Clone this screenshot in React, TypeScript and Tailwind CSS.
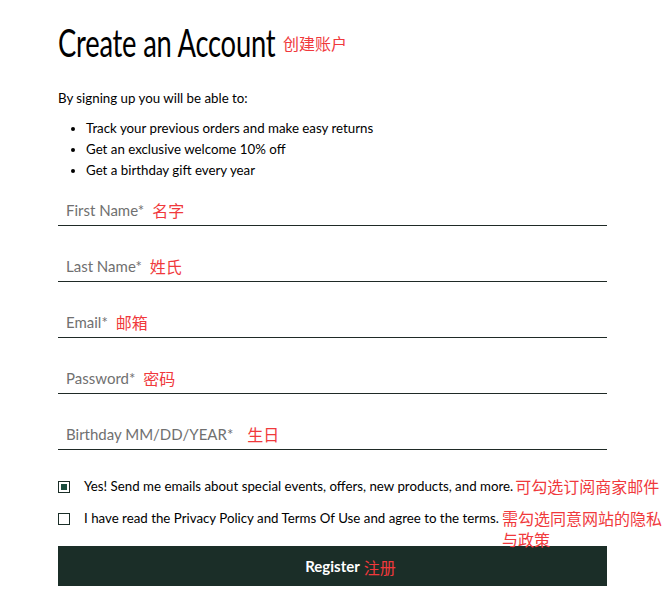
import React from "react";

const FIELDS = [
  { label: "First Name*", note: "名字", gap: "ml-2" },
  { label: "Last Name*", note: "姓氏", gap: "ml-2" },
  { label: "Email*", note: "邮箱", gap: "ml-2" },
  { label: "Password*", note: "密码", gap: "ml-2" },
  { label: "Birthday MM/DD/YEAR*", note: "生日", gap: "ml-[14px]" },
];

const BULLETS = [
  "Track your previous orders and make easy returns",
  "Get an exclusive welcome 10% off",
  "Get a birthday gift every year",
];

const body = "font-['Lato','Noto_Sans_CJK_SC',sans-serif]";
const note = "font-['Noto_Sans_CJK_SC',sans-serif] text-[#f0393c]";

export default function App() {
  return (
    <div className={`min-h-[616px] w-[666px] bg-white ${body} text-black`}>
      <div className="flex w-[607px] flex-col pl-[58px] pt-[20px]">
        <div className="flex items-end">
          <h1 className="w-[217px] origin-left scale-x-[0.72] whitespace-nowrap text-[38px] leading-[44px] tracking-[-0.3px] text-black">
            Create an Account
          </h1>
          <span className={`${note} mb-[10px] ml-2 text-[16px] leading-[22px]`}>创建账户</span>
        </div>

        <p className="mt-[25px] text-[13.3px] leading-[18px]">By signing up you will be able to:</p>
        <ul className="mt-[11px] flex list-disc flex-col pl-[28px] text-[13.3px] leading-[21px]">
          {BULLETS.map((b) => (
            <li key={b}>{b}</li>
          ))}
        </ul>

        <div className="mt-[-11px] flex flex-col">
          {FIELDS.map((f) => (
            <div key={f.label} className="flex h-[56px] items-end border-b border-[#1f2a26]">
              <div className="mb-[5px] flex items-center pl-2 text-[15px] leading-[20px]">
                <span className="text-[#707070]">{f.label}</span>
                <span className={`${note} ${f.gap} text-[16px]`}>{f.note}</span>
              </div>
            </div>
          ))}
        </div>

        <div className="mt-[25px] flex flex-col gap-[10px] text-[13.3px] leading-[22px]">
          <div className="flex items-start">
            <span className="mt-[6px] flex h-[12px] w-[12px] shrink-0 items-center justify-center border border-[#1b2e28]">
              <span className="h-[6px] w-[6px] bg-[#1b4d3e]" />
            </span>
            <span className="ml-[14px] whitespace-nowrap">
              Yes! Send me emails about special events, offers, new products, and more.
            </span>
            <span className={`${note} ml-[2px] shrink-0 whitespace-nowrap text-[16px]`}>可勾选订阅商家邮件</span>
          </div>
          <div className="flex items-start">
            <span className="mt-[6px] h-[12px] w-[12px] shrink-0 border border-[#1b2e28]" />
            <span className="relative ml-[14px] whitespace-nowrap">
              I have read the Privacy Policy and Terms Of Use and agree to the terms.
              <span className={`${note} absolute left-full top-[1px] ml-[3px] flex flex-col whitespace-nowrap text-[16px] leading-[21px]`}>
                <span>需勾选同意网站的隐私</span>
                <span>与政策</span>
              </span>
            </span>
          </div>
        </div>

        <button
          type="button"
          className="mt-[17px] flex h-[40px] w-[549px] items-center justify-center bg-[#1b2e28]"
        >
          <span className="relative text-[15px] font-bold text-white">
            Register
            <span className={`${note} absolute left-full top-0 ml-[4px] whitespace-nowrap text-[16px] font-normal`}>注册</span>
          </span>
        </button>
      </div>
    </div>
  );
}
